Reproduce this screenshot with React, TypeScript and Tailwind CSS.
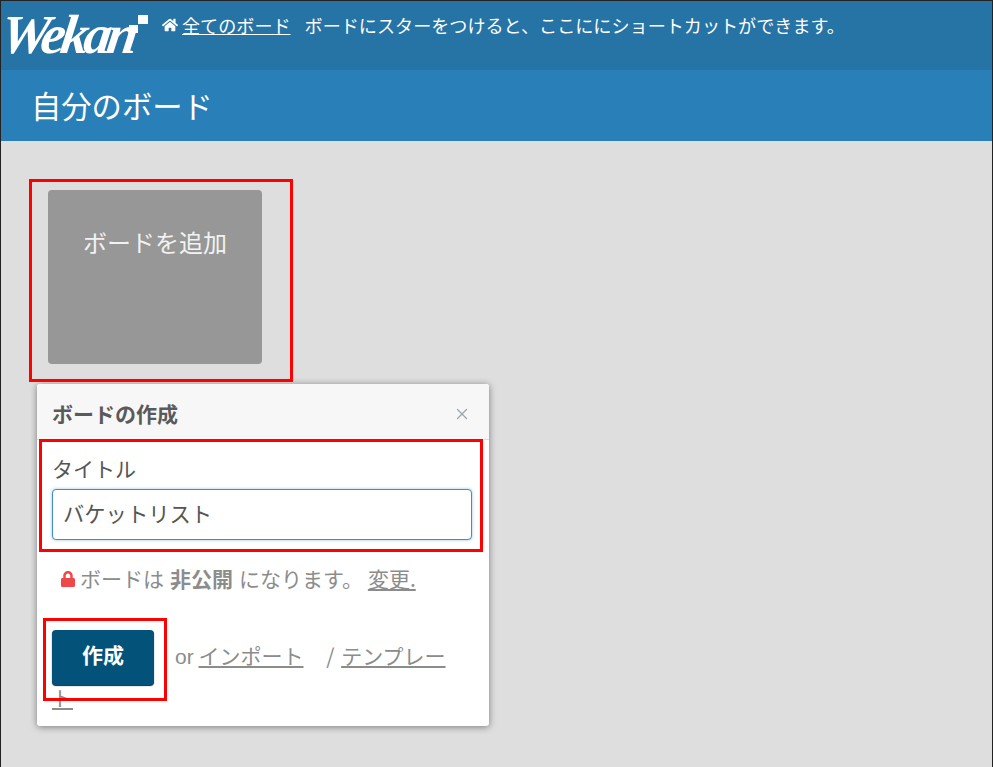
import { FaHome, FaLock } from "react-icons/fa";
import { X } from "lucide-react";

const font = { fontFamily: '"Noto Sans CJK JP", "Liberation Sans", sans-serif' };

export default function App() {
  return (
    <div
      className="relative h-[767px] w-[993px] overflow-hidden border-x border-t border-[#222] bg-[#dedede] font-['Liberation_Sans','Noto_Sans_CJK_JP',sans-serif]"
    >
      {/* top nav */}
      <div className="flex h-[69px] items-start bg-[#2673a6] text-white">
        <div className="relative ml-[1px] h-[60px] w-[160px] shrink-0">
          <span className="absolute -left-[5px] top-[4px] origin-bottom-left -skew-x-[8deg] font-['Liberation_Serif',serif] text-[55px] leading-[60px] font-bold italic tracking-[-4.5px]">
            Wekan
          </span>
          <span className="absolute left-[136px] top-[14px] h-[9px] w-[10px] bg-white" />
          <span className="absolute left-[127px] top-[24px] h-[8px] w-[9px] bg-white" />
        </div>
        <div style={font} className="mt-[10px] flex items-center text-[18.1px] leading-[28px]">
          <FaHome className="text-[16px]" />
          <a className="ml-[4px] underline">全てのボード</a>
          <span className="ml-[14px] whitespace-nowrap">ボードにスターをつけると、ここににショートカットができます。</span>
        </div>
      </div>

      {/* page header */}
      <div className="flex h-[71px] items-start bg-[#2980b9] pl-[30px] text-white">
        <h1 style={font} className="text-[30.3px] leading-[70px] font-normal">自分のボード</h1>
      </div>

      {/* boards */}
      <div className="pt-[49px] pl-[47px]">
        <div
          style={font}
          className="h-[174px] w-[214px] rounded-[4px] bg-[#969796] pt-[34px] text-center text-[24px] leading-[36px] text-[#f2f2f2]"
        >
          ボードを追加
        </div>
      </div>

      {/* create board popup */}
      <div className="mt-[20px] ml-[36px] h-[342px] w-[452px] overflow-hidden rounded-[3px] bg-white shadow-[0_1px_7px_rgba(0,0,0,0.45)]">
        <div className="flex h-[56px] items-center justify-between border-b border-[#dcdcdc] bg-[#f7f7f7] pt-[4px] pr-[18px] pl-[15px]">
          <span style={font} className="text-[21px] font-bold text-[#5a5a5a]">ボードの作成</span>
          <X size={18} strokeWidth={1.6} className="text-[#9aa5ad]" />
        </div>
        <div className="px-[15px]" style={font}>
          <label className="mt-[12px] block text-[21px] leading-[32px] text-[#555]">タイトル</label>
          <input
            readOnly
            value="バケットリスト"
            style={font}
            className="mt-[5px] block h-[51px] w-[420px] rounded-[4px] border border-[#3d8fc4] bg-white px-[10px] pb-[5px] text-[21.3px] text-[#555] shadow-[0_0_3px_rgba(41,128,185,0.5)] outline-none"
          />
          <div className="mt-[19px] flex h-[40px] items-center pl-[8px] text-[21px] text-[#8c8c8c]">
            <FaLock className="mr-[4px] text-[16px] text-[#f04848]" />
            <span>ボードは</span>
            <b className="ml-[6px]">非公開</b>
            <span className="ml-[6px]">になります。</span>
            <a className="ml-[5px] underline">変更.</a>
          </div>
          <div className="mt-[31px] w-[400px] text-[21px] leading-[41px] text-[#8c8c8c]">
            <button className="float-left mr-[21px] mb-[-10px] h-[55px] w-[102px] rounded-[4px] bg-[#02527a] pb-[7px] text-[21px] leading-[24px] font-bold text-white shadow-[0_1px_1px_#222]">
              作成
            </button>
            <div className="pt-[5px]">
              <span className="font-['Liberation_Sans',sans-serif]">or </span>
              <a className="-ml-[1px] underline">インポート</a>
              <span className="ml-[18px]"> / </span>
              <a className="ml-[2px] underline">テンプレート</a>
            </div>
          </div>
        </div>
      </div>

      {/* red annotation boxes */}
      <div className="absolute top-[178px] left-[28px] h-[203px] w-[264px] border-[3px] border-[#f00]" />
      <div className="absolute top-[438px] left-[38px] h-[113px] w-[444px] border-[3px] border-[#f00]" />
      <div className="absolute top-[617px] left-[42px] h-[83px] w-[124px] border-[3px] border-[#f00]" />
    </div>
  );
}
